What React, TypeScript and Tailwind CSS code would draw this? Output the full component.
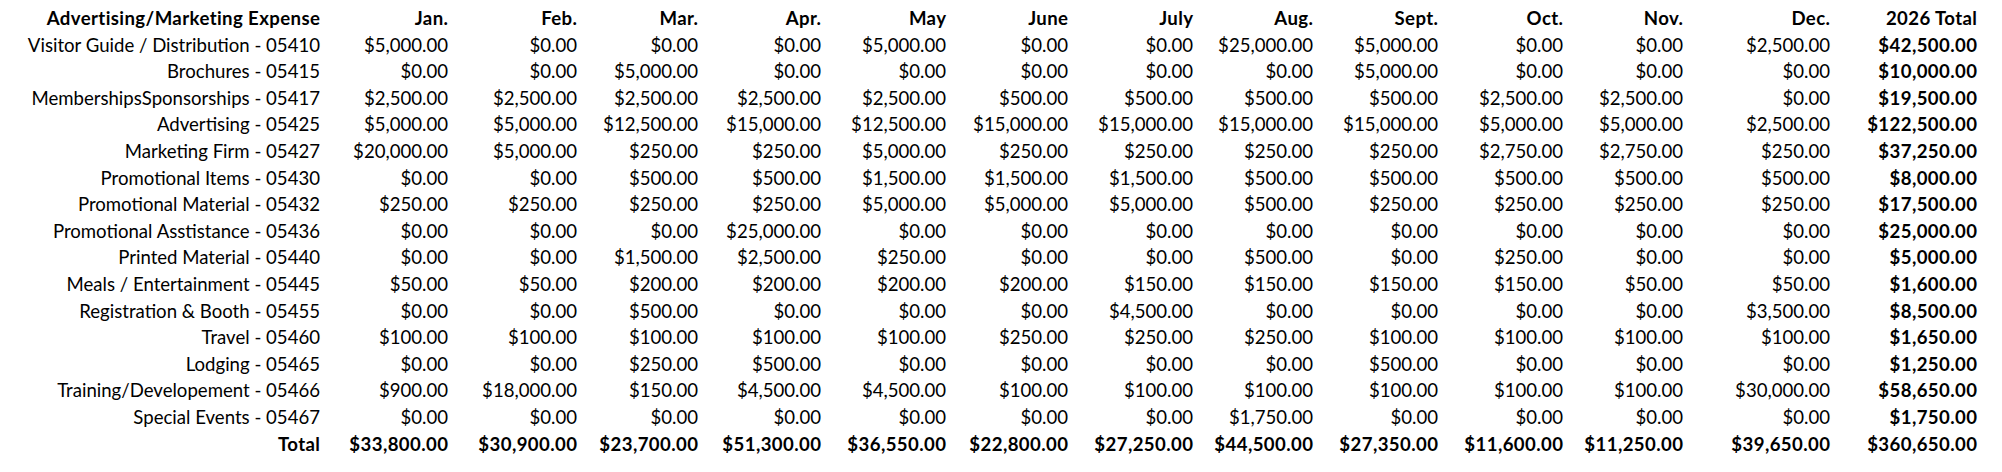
import React from "react";

const months = ["Jan.", "Feb.", "Mar.", "Apr.", "May", "June", "July", "Aug.", "Sept.", "Oct.", "Nov.", "Dec.", "2026 Total"];

const rows: [string, string[]][] = [
  ["Visitor Guide / Distribution - 05410", ["$5,000.00", "$0.00", "$0.00", "$0.00", "$5,000.00", "$0.00", "$0.00", "$25,000.00", "$5,000.00", "$0.00", "$0.00", "$2,500.00", "$42,500.00"]],
  ["Brochures - 05415", ["$0.00", "$0.00", "$5,000.00", "$0.00", "$0.00", "$0.00", "$0.00", "$0.00", "$5,000.00", "$0.00", "$0.00", "$0.00", "$10,000.00"]],
  ["MembershipsSponsorships - 05417", ["$2,500.00", "$2,500.00", "$2,500.00", "$2,500.00", "$2,500.00", "$500.00", "$500.00", "$500.00", "$500.00", "$2,500.00", "$2,500.00", "$0.00", "$19,500.00"]],
  ["Advertising - 05425", ["$5,000.00", "$5,000.00", "$12,500.00", "$15,000.00", "$12,500.00", "$15,000.00", "$15,000.00", "$15,000.00", "$15,000.00", "$5,000.00", "$5,000.00", "$2,500.00", "$122,500.00"]],
  ["Marketing Firm - 05427", ["$20,000.00", "$5,000.00", "$250.00", "$250.00", "$5,000.00", "$250.00", "$250.00", "$250.00", "$250.00", "$2,750.00", "$2,750.00", "$250.00", "$37,250.00"]],
  ["Promotional Items - 05430", ["$0.00", "$0.00", "$500.00", "$500.00", "$1,500.00", "$1,500.00", "$1,500.00", "$500.00", "$500.00", "$500.00", "$500.00", "$500.00", "$8,000.00"]],
  ["Promotional Material - 05432", ["$250.00", "$250.00", "$250.00", "$250.00", "$5,000.00", "$5,000.00", "$5,000.00", "$500.00", "$250.00", "$250.00", "$250.00", "$250.00", "$17,500.00"]],
  ["Promotional Asstistance - 05436", ["$0.00", "$0.00", "$0.00", "$25,000.00", "$0.00", "$0.00", "$0.00", "$0.00", "$0.00", "$0.00", "$0.00", "$0.00", "$25,000.00"]],
  ["Printed Material - 05440", ["$0.00", "$0.00", "$1,500.00", "$2,500.00", "$250.00", "$0.00", "$0.00", "$500.00", "$0.00", "$250.00", "$0.00", "$0.00", "$5,000.00"]],
  ["Meals / Entertainment - 05445", ["$50.00", "$50.00", "$200.00", "$200.00", "$200.00", "$200.00", "$150.00", "$150.00", "$150.00", "$150.00", "$50.00", "$50.00", "$1,600.00"]],
  ["Registration & Booth - 05455", ["$0.00", "$0.00", "$500.00", "$0.00", "$0.00", "$0.00", "$4,500.00", "$0.00", "$0.00", "$0.00", "$0.00", "$3,500.00", "$8,500.00"]],
  ["Travel - 05460", ["$100.00", "$100.00", "$100.00", "$100.00", "$100.00", "$250.00", "$250.00", "$250.00", "$100.00", "$100.00", "$100.00", "$100.00", "$1,650.00"]],
  ["Lodging - 05465", ["$0.00", "$0.00", "$250.00", "$500.00", "$0.00", "$0.00", "$0.00", "$0.00", "$500.00", "$0.00", "$0.00", "$0.00", "$1,250.00"]],
  ["Training/Developement - 05466", ["$900.00", "$18,000.00", "$150.00", "$4,500.00", "$4,500.00", "$100.00", "$100.00", "$100.00", "$100.00", "$100.00", "$100.00", "$30,000.00", "$58,650.00"]],
  ["Special Events - 05467", ["$0.00", "$0.00", "$0.00", "$0.00", "$0.00", "$0.00", "$0.00", "$1,750.00", "$0.00", "$0.00", "$0.00", "$0.00", "$1,750.00"]],
];

const totals = ["$33,800.00", "$30,900.00", "$23,700.00", "$51,300.00", "$36,550.00", "$22,800.00", "$27,250.00", "$44,500.00", "$27,350.00", "$11,600.00", "$11,250.00", "$39,650.00", "$360,650.00"];

const bold = "font-bold tracking-[0.4px] -mr-[0.4px]";

export default function App() {
  return (
    <div className="w-[2002px] h-[472px] bg-white text-black overflow-hidden pt-[5px] font-['Lato','Open_Sans',sans-serif] text-[18.6px] leading-[26.6px]">
      <div className="grid grid-cols-[320px_128px_129px_121px_123px_125px_122px_125px_120px_125px_125px_120px_147px_147px] text-right whitespace-nowrap">
        <div className={bold}>Advertising/Marketing Expense</div>
        {months.map((m) => (
          <div key={m} className={bold}>{m}</div>
        ))}
        {rows.map(([label, vals]) => (
          <React.Fragment key={label}>
            <div>{label}</div>
            {vals.map((v, i) => (
              <div key={i} className={i === 12 ? bold : ""}>{v}</div>
            ))}
          </React.Fragment>
        ))}
        <div className={bold}>Total</div>
        {totals.map((v, i) => (
          <div key={i} className={bold}>{v}</div>
        ))}
      </div>
    </div>
  );
}
